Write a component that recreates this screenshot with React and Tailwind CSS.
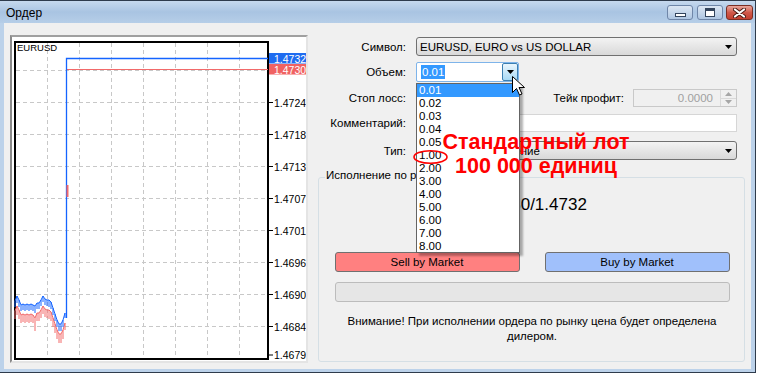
import React from "react";

const FONT = "font-['Liberation_Sans',Arial,sans-serif]";

const gridX = [47.5, 79.5, 111.5, 143.5, 175.5, 207.5, 239.5];
const gridY = [70.5, 102.5, 134.5, 166.5, 198.5, 230.5, 262.5, 294.5, 326.5];
const axis = [
  [102.5, "1.4724"],
  [134.5, "1.4718"],
  [166.5, "1.4713"],
  [198.5, "1.4707"],
  [230.5, "1.4701"],
  [262.5, "1.4696"],
  [294.5, "1.4690"],
  [326.5, "1.4684"],
  [355, "1.4679"],
];

// x, high, low for the tick history before the spike
const blueBars = [
  [15, 301, 307], [17, 296, 303], [19, 300, 307], [21, 305, 311], [23, 304, 310],
  [25, 305, 311], [27, 304, 310], [29, 305, 311], [31, 304, 310], [33, 305, 311],
  [35, 306, 313], [37, 303, 309], [39, 303, 309], [41, 300, 306], [43, 296, 302],
  [45, 299, 305], [47, 300, 306], [49, 300, 307], [51, 302, 309], [53, 308, 315],
  [55, 314, 321], [57, 320, 327], [59, 324, 331], [61, 324, 331], [63, 320, 327],
  [65, 313, 318],
];
const redBars = blueBars.map(([x, h, l]) =>
  x === 35 ? [x, 318, 331] : [x, h + 10, Math.min(l + 12, 343)]
);

function Chart() {
  return (
    <svg width="294" height="324" viewBox="12 37 294 324" className="block">
      {gridX.map((x) => (
        <line key={x} x1={x} y1={43} x2={x} y2={358} stroke="#c8c8c8" strokeDasharray="4 3" />
      ))}
      {gridY.map((y) => (
        <line key={y} x1={16} y1={y} x2={267} y2={y} stroke="#c8c8c8" strokeDasharray="4 3" />
      ))}
      <rect x="15" y="42" width="253" height="317" fill="none" stroke="#000" strokeWidth="2" />
      {axis.map(([y, t]) => (
        <g key={t}>
          <line x1={269} y1={y} x2={273} y2={y} stroke="#000" />
          <text x={274} y={y} dominantBaseline="central" fontSize="10.5" fontFamily="Liberation Sans, Arial, sans-serif" fill="#000">
            {t}
          </text>
        </g>
      ))}
      <text x={17} y={47.5} dominantBaseline="central" fontSize="9.5" fontFamily="Liberation Sans, Arial, sans-serif" fill="#000">
        EURUSD
      </text>

      {/* bid / ask lines */}
      <line x1={66} y1={69.5} x2={268} y2={69.5} stroke="#f26a6a" />
      <polyline points="66.5,318 66.5,58.5 268,58.5" fill="none" stroke="#1464ff" strokeWidth="1.3" />
      <line x1={67.5} y1={185} x2={67.5} y2={197} stroke="#f26a6a" strokeWidth="2" />

      <polyline points={redBars.map(([x, h]) => `${x},${h}`).join(" ")} fill="none" stroke="#f26a6a" />
      {redBars.map(([x, h, l]) => (
        <line key={"r" + x} x1={x} y1={h} x2={x} y2={l} stroke="#f26a6a" />
      ))}
      <polyline points={blueBars.map(([x, h]) => `${x},${h}`).join(" ")} fill="none" stroke="#1464ff" />
      {blueBars.map(([x, h, l]) => (
        <line key={"b" + x} x1={x} y1={h} x2={x} y2={l} stroke="#1464ff" />
      ))}

      {/* price tags */}
      <rect x="269" y="53" width="37" height="10.5" fill="#1f6cf0" />
      <text x={274} y={58.5} dominantBaseline="central" fontSize="10.5" fontFamily="Liberation Sans, Arial, sans-serif" fill="#fff">
        1.4732
      </text>
      <rect x="269" y="64" width="37" height="10.5" fill="#f06262" />
      <text x={274} y={69.5} dominantBaseline="central" fontSize="10.5" fontFamily="Liberation Sans, Arial, sans-serif" fill="#fff">
        1.4730
      </text>
    </svg>
  );
}

function Arrow({ color = "#000" }) {
  return (
    <svg width="7" height="4" viewBox="0 0 7 4">
      <path d="M0 0h7L3.5 4z" fill={color} />
    </svg>
  );
}

function Label({ children }) {
  return <span className="w-[98px] shrink-0 text-right">{children}</span>;
}

const volumes = ["0.01", "0.02", "0.03", "0.04", "0.05", "1.00", "2.00", "3.00", "4.00", "5.00", "6.00", "7.00", "8.00"];

export default function App() {
  return (
    <div className={`relative w-[758px] h-[376px] bg-white overflow-hidden text-[11.5px] leading-[14px] text-black ${FONT}`}>
      <div className="w-[756px] h-[373px] border-t border-r border-b border-[#2e3b4c] bg-[#bcd2ea] flex flex-col">
        {/* Title bar */}
        <div className="h-[22px] flex items-start justify-between bg-linear-to-b from-[#c6d9ee] via-[#a9c4e2] to-[#b6cee8]">
          <span className="pl-[6px] pt-[5px] text-[12px] leading-[15px]">Ордер</span>
          <div className="flex pt-[4px] pr-[2px]">
            <div className="w-[26px] h-[15px] rounded-[3px] border border-[#6f86a8] bg-linear-to-b from-[#dce7f3] to-[#afc6e2] flex items-end justify-center pb-[2px]">
              <div className="w-[11px] h-[4px] bg-white border border-[#33445c]" />
            </div>
            <div className="ml-[4px] w-[26px] h-[15px] rounded-[3px] border border-[#6f86a8] bg-linear-to-b from-[#dce7f3] to-[#afc6e2] flex items-center justify-center">
              <div className="w-[10px] h-[9px] bg-white border border-[#33445c] border-t-[3px]" />
            </div>
            <div className="ml-[3px] w-[27px] h-[15px] rounded-[3px] border border-[#7a2e24] bg-linear-to-b from-[#e7a69d] via-[#d0594b] to-[#c43e2f] flex items-center justify-center">
              <svg width="13" height="10" viewBox="0 0 13 10">
                <path d="M2 1.5l9 7M11 1.5l-9 7" stroke="#4a1a14" strokeWidth="4" strokeLinecap="round" />
                <path d="M2 1.5l9 7M11 1.5l-9 7" stroke="#fff" strokeWidth="2.2" strokeLinecap="round" />
              </svg>
            </div>
          </div>
        </div>

        {/* Client area */}
        <div className="mx-[4px] h-[346px] bg-[#f0f0f0] flex pt-[12px] pl-[6px]">
          <div className="w-[298px] h-[328px] shrink-0 border-2 border-t-[#a0a0a0] border-l-[#8a8a8a] border-b-[#e4e4e4] border-r-[#e4e4e4] bg-white">
            <Chart />
          </div>

          <div className="flex-1 flex flex-col pt-[2px]">
            <div className="h-[19px] flex items-center">
              <Label>Символ:</Label>
              <div className="ml-[10px] w-[321px] h-[19px] rounded-[3px] border border-[#707070] bg-linear-to-b from-[#f3f3f3] to-[#d9d9d9] flex items-center justify-between pl-[3px] pr-[4px]">
                <span>EURUSD, EURO vs US DOLLAR</span>
                <Arrow />
              </div>
            </div>

            <div className="mt-[6px] h-[20px] flex items-center">
              <Label>Объем:</Label>
              <div className="ml-[10px] w-[103px] h-[20px] rounded-[2px] border border-[#7eb4ea] bg-white flex items-center justify-between pl-[4px]">
                <span className="bg-[#3399ff] text-white px-[1px] leading-[14px]">0.01</span>
                <div className="w-[16px] h-[18px] border border-[#3c7fb1] rounded-[2px] bg-linear-to-b from-[#eaf6fd] to-[#a7d9f5] flex items-center justify-center">
                  <Arrow />
                </div>
              </div>
            </div>

            <div className="mt-[7px] h-[18px] flex items-center">
              <Label>Стоп лосс:</Label>
              <div className="ml-[10px] w-[104px] h-[18px] border border-[#abadb3] bg-white" />
              <span className="w-[104px] text-right">Тейк профит:</span>
              <div className="ml-[9px] w-[104px] h-[18px] border border-[#c9c9c9] bg-[#f0f0f0] flex items-stretch">
                <span className="flex-1 text-right pr-[7px] text-[#a0a0a0] leading-[16px]">0.0000</span>
                <div className="w-[16px] flex flex-col border-l border-[#d9d9d9]">
                  <div className="flex-1 flex items-center justify-center border-b border-[#d9d9d9]">
                    <svg width="7" height="4" viewBox="0 0 7 4"><path d="M0 4h7L3.5 0z" fill="#a6a6a6" /></svg>
                  </div>
                  <div className="flex-1 flex items-center justify-center">
                    <Arrow color="#a6a6a6" />
                  </div>
                </div>
              </div>
            </div>

            <div className="mt-[7px] h-[18px] flex items-center">
              <Label>Комментарий:</Label>
              <div className="ml-[10px] w-[321px] h-[18px] border border-[#d6d6d6] bg-white" />
            </div>

            <div className="mt-[9px] h-[19px] flex items-center">
              <Label>Тип:</Label>
              <div className="ml-[10px] w-[321px] h-[19px] rounded-[3px] border border-[#707070] bg-linear-to-b from-[#f3f3f3] to-[#d9d9d9] flex items-center justify-between pl-[3px] pr-[4px]">
                <span>Рыночное исполнение</span>
                <Arrow />
              </div>
            </div>

            <div className="relative mt-[17px] ml-[10px] w-[427px] h-[185px] rounded-[3px] border border-[#d5dfe5] flex flex-col items-center">
              <span className="absolute -top-[9px] left-[6px] px-[1px] bg-[#f0f0f0] leading-[13px]">Исполнение по рынку</span>
              <div className="mt-[16px] h-[22px] text-[17px] leading-[22px] pl-[2px]">1.4730/1.4732</div>
              <div className="mt-[36px] flex gap-[25px] pl-[1px]">
                <div className="w-[185px] h-[20px] rounded-[3px] border border-[#707070] bg-[#ff8080] flex items-center justify-center">Sell by Market</div>
                <div className="w-[185px] h-[20px] rounded-[3px] border border-[#707070] bg-[#a0c0fb] flex items-center justify-center">Buy by Market</div>
              </div>
              <div className="mt-[10px] ml-[1px] w-[395px] h-[20px] rounded-[3px] border border-[#bcbcbc] bg-[#e6e6e6]" />
              <p className="mt-[12px] ml-[1px] w-[395px] text-center leading-[15px]">
                Внимание! При исполнении ордера по рынку цена будет определена
                <br />
                дилером.
              </p>
            </div>
          </div>
        </div>
      </div>

      {/* Open volume list */}
      <div className="absolute left-[416px] top-[83px] w-[104px] h-[170px] border border-[#646464] bg-white shadow-[3px_3px_2px_rgba(0,0,0,0.3)]">
        {volumes.map((v, i) => (
          <div key={v} className={`h-[13px] leading-[13px] pl-[2px] ${i === 0 ? "bg-[#3399ff] text-white" : ""}`}>
            {v}
          </div>
        ))}
      </div>

      {/* Mouse pointer */}
      <svg className="absolute left-[512px] top-[76px]" width="13" height="20" viewBox="0 0 13 20">
        <path d="M0.5 0.5v16l4-4 3 6.5 2.5-1-3-6.5h5.5z" fill="#fff" stroke="#000" strokeWidth="1" strokeLinejoin="round" />
      </svg>

      {/* Annotation */}
      <svg className="absolute left-[412px] top-[149px]" width="37" height="16" viewBox="0 0 37 16">
        <ellipse cx="18.5" cy="8" rx="16.5" ry="6.3" fill="none" stroke="#ff0000" strokeWidth="1.6" />
      </svg>
      <div className="absolute left-[436px] top-[131px] w-[200px] text-center text-[21.5px] leading-[23.5px] font-bold text-[#ff0000]">
        Стандартный лот
        <br />
        100 000 единиц
      </div>
    </div>
  );
}
